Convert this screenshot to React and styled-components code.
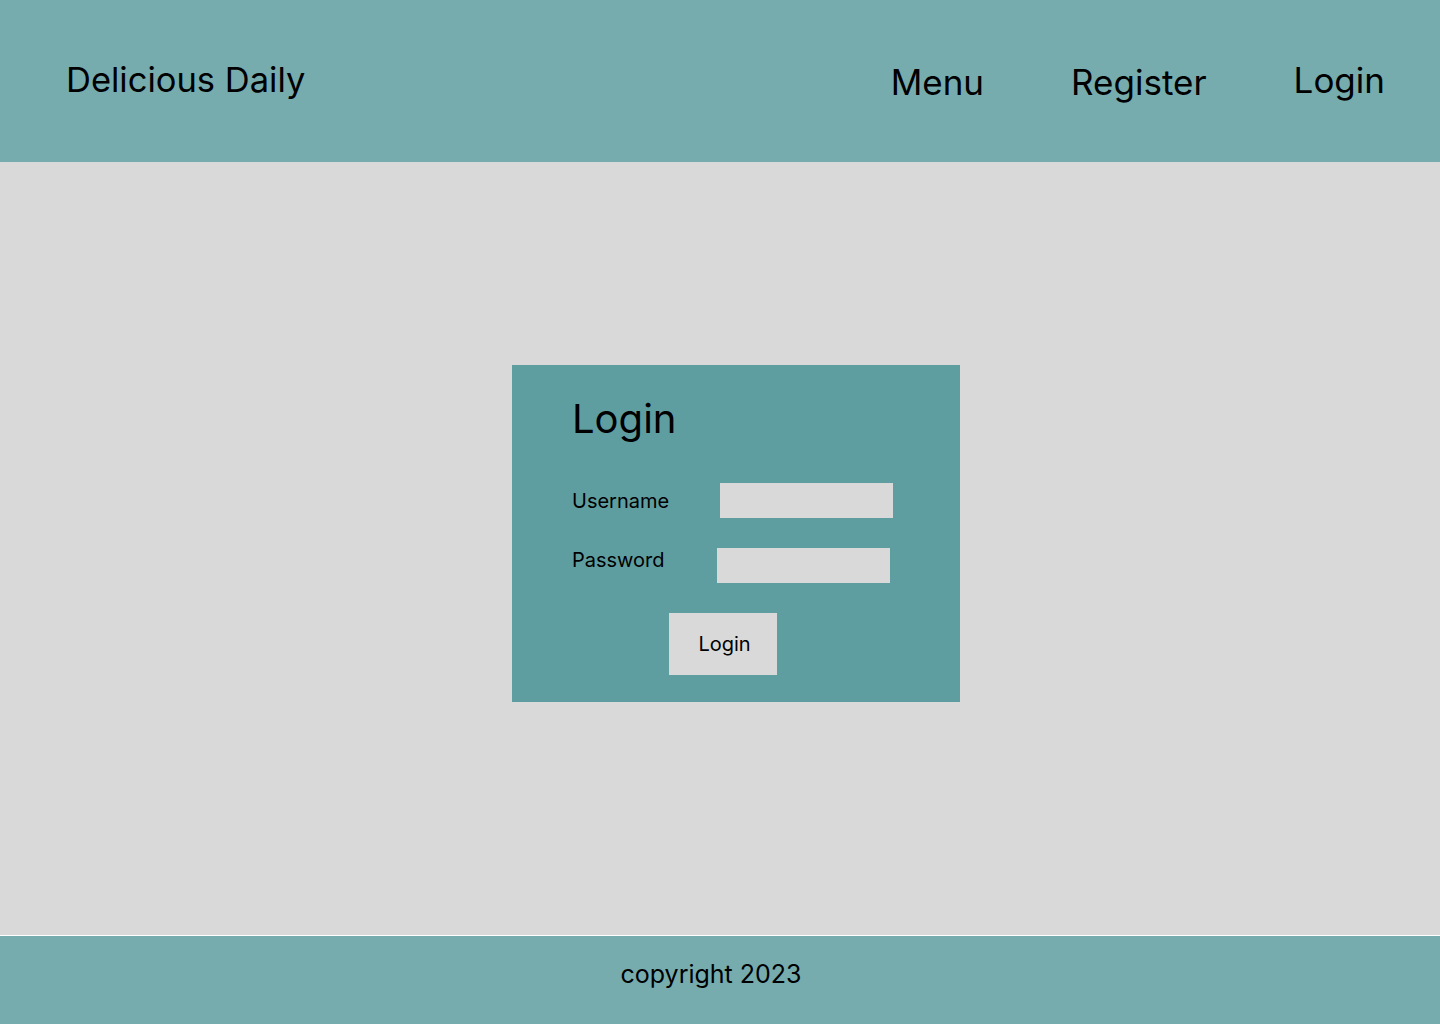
import React from 'react';
import styled, { createGlobalStyle } from 'styled-components';

const GlobalStyle = createGlobalStyle`
    html, body {
        margin: 0;
        padding: 0;
        background: #d9d9d9;
        font-family: Inter, "Noto Sans", sans-serif;
        color: #000;
    }
`;

const Page = styled.div`
    min-height: 100vh;
    display: flex;
    flex-direction: column;
`;

const Header = styled.header`
    height: 162px;
    flex-shrink: 0;
    background: #76acae;
    display: flex;
    align-items: flex-start;
    justify-content: space-between;
    padding: 0 55px 0 66px;
    box-sizing: border-box;
`;

const Logo = styled.div`
    font-size: 34.5px;
    line-height: 41px;
    margin-top: 59px;
`;

const Nav = styled.nav`
    display: flex;
    align-items: flex-start;
    gap: 87px;
`;

const NavLink = styled.a`
    font-size: 35px;
    line-height: 42px;
    margin-top: ${props => props.top}px;
    cursor: pointer;
`;

const Main = styled.main`
    flex: 1;
    padding: 203px 0 0 512px;
`;

const Card = styled.section`
    width: 448px;
    box-sizing: border-box;
    background: #5f9ea0;
    padding: 28px 60px 27px 60px;
`;

const Title = styled.h1`
    margin: 0 0 39px;
    font-size: 40px;
    font-weight: 400;
    line-height: 51px;
`;

const Row = styled.div`
    display: flex;
    align-items: flex-start;
    gap: ${props => props.gap}px;
    margin-bottom: 30px;
`;

const Label = styled.label`
    font-size: 20px;
    line-height: 24px;
    margin-top: ${props => props.top}px;
`;

const Input = styled.input`
    width: 173px;
    height: 35px;
    box-sizing: border-box;
    border: none;
    background: #d9d9d9;
    outline: none;
`;

const Button = styled.button`
    display: block;
    margin-left: 97px;
    width: 108px;
    height: 62px;
    border: none;
    background: #d9d9d9;
    font-family: inherit;
    font-size: 20px;
    color: #000;
    padding: 0 0 0 3px;
    cursor: pointer;
`;

const Footer = styled.footer`
    height: 89px;
    flex-shrink: 0;
    box-sizing: border-box;
    border-top: 1px solid #ffffff;
    background: #76acae;
    text-align: center;
    font-size: 25px;
    line-height: 30px;
    padding: 23px 18px 0 0;
`;

class App extends React.Component {
    render() {
        return (
            <Page>
                <GlobalStyle />
                <Header>
                    <Logo>Delicious Daily</Logo>
                    <Nav>
                        <NavLink top={61}>Menu</NavLink>
                        <NavLink top={61}>Register</NavLink>
                        <NavLink top={59}>Login</NavLink>
                    </Nav>
                </Header>
                <Main>
                    <Card>
                        <Title>Login</Title>
                        <Row gap={51}>
                            <Label top={6}>Username</Label>
                            <Input type="text" />
                        </Row>
                        <Row gap={52}>
                            <Label top={0}>Password</Label>
                            <Input type="password" />
                        </Row>
                        <Button>Login</Button>
                    </Card>
                </Main>
                <Footer>copyright 2023</Footer>
            </Page>
        );
    }
}

export default App;
